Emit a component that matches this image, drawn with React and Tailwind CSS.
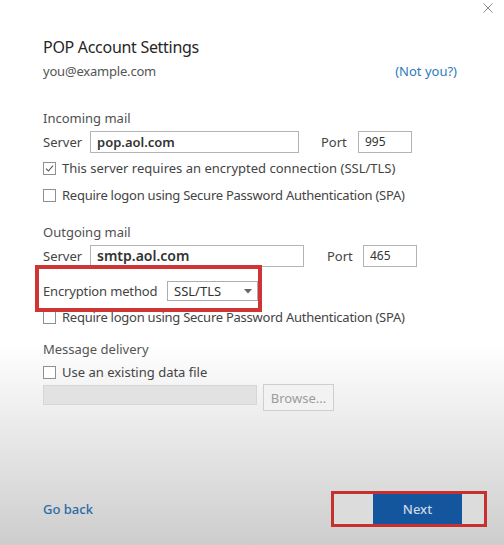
import React from "react";

function Checkbox({ checked }) {
  return (
    <div className="w-[13px] h-[13px] border border-[#8f8f8f] bg-white flex items-center justify-center shrink-0">
      {checked && (
        <svg width="9" height="9" viewBox="0 0 9 9" fill="none">
          <path d="M1 4.6 L3.4 7 L8 1.6" stroke="#555" strokeWidth="1.1" />
        </svg>
      )}
    </div>
  );
}

export default function App() {
  return (
    <div
      className="w-[504px] h-[545px] flex flex-col bg-[linear-gradient(180deg,#ffffff_0%,#ffffff_63%,#cdcdcd_100%)] text-[#444] text-[13px] leading-[20px] overflow-hidden"
      style={{ fontFamily: '"Noto Sans", "Open Sans", sans-serif' }}
    >
      {/* close */}
      <div className="h-[16px] flex justify-end items-center pr-[11px]">
        <svg width="10" height="10" viewBox="0 0 10 10">
          <path d="M0.5 0.5 L9.5 9.5 M9.5 0.5 L0.5 9.5" stroke="#8a8a8a" strokeWidth="1" />
        </svg>
      </div>

      <div className="pl-[43px] pr-[47px] flex flex-col">
        <div className="mt-[20px] h-[22px] flex items-center text-[16px] tracking-[-0.3px] text-[#262626]">
          POP Account Settings
        </div>
        <div className="mt-[3px] h-[20px] flex items-center justify-between">
          <span className="text-[#555] tracking-[-0.2px]">you@example.com</span>
          <span className="text-[#2b7bbd]">(Not you?)</span>
        </div>

        {/* Incoming */}
        <div className="mt-[27px] h-[20px] flex items-center text-[#505050]">Incoming mail</div>
        <div className="mt-[3px] h-[22px] flex items-center">
          <span className="w-[47px]">Server</span>
          <div className="w-[209px] h-[22px] border border-[#b4b4b4] bg-white flex items-center pl-[6px] font-semibold text-[#333]">
            pop.aol.com
          </div>
          <span className="ml-[22px] w-[37px]">Port</span>
          <div className="w-[54px] h-[22px] border border-[#b4b4b4] bg-white flex items-center pl-[6px] text-[12px] text-[#333]">
            995
          </div>
        </div>
        <div className="mt-[5px] h-[20px] flex items-center gap-[6px]">
          <Checkbox checked />
          <span>This server requires an encrypted connection (SSL/TLS)</span>
        </div>
        <div className="mt-[7px] h-[20px] flex items-center gap-[6px]">
          <Checkbox />
          <span className="tracking-[-0.25px]">Require logon using Secure Password Authentication (SPA)</span>
        </div>

        {/* Outgoing */}
        <div className="mt-[17px] h-[20px] flex items-center text-[#505050]">Outgoing mail</div>
        <div className="mt-[3px] h-[22px] flex items-center">
          <span className="w-[47px]">Server</span>
          <div className="w-[214px] h-[22px] border border-[#b4b4b4] bg-white flex items-center pl-[6px] font-semibold text-[#333] text-[14px]">
            smtp.aol.com
          </div>
          <span className="ml-[23px] w-[36px]">Port</span>
          <div className="w-[54px] h-[22px] border border-[#b4b4b4] bg-white flex items-center pl-[6px] text-[12px] text-[#333]">
            465
          </div>
        </div>
        <div className="relative mt-[14px] h-[20px] flex items-center">
          <span className="w-[124px] tracking-[-0.15px]">Encryption method</span>
          <div className="w-[91px] h-[20px] border border-[#adadad] bg-white flex items-center justify-between pl-[6px] pr-[5px] text-[#333]">
            <span>SSL/TLS</span>
            <svg width="8" height="5" viewBox="0 0 8 5">
              <path d="M0 0 L8 0 L4 4.5 Z" fill="#666" />
            </svg>
          </div>
          <div className="absolute left-[-8px] top-[-16px] w-[227px] h-[47px] border-[4px] border-[#cf3535]" />
        </div>
        <div className="mt-[6px] h-[20px] flex items-center gap-[6px]">
          <Checkbox />
          <span className="tracking-[-0.25px]">Require logon using Secure Password Authentication (SPA)</span>
        </div>

        {/* Message delivery */}
        <div className="mt-[12px] h-[20px] flex items-center text-[#555]">Message delivery</div>
        <div className="mt-[3px] h-[20px] flex items-center gap-[6px]">
          <Checkbox />
          <span>Use an existing data file</span>
        </div>
        <div className="mt-[2px] flex items-start gap-[6px]">
          <div className="mt-[1px] w-[214px] h-[20px] bg-[#e2e2e2] border border-[#d6d6d6]" />
          <div className="w-[71px] h-[27px] border border-[#cfcfcf] bg-[#f2f2f2] flex items-center justify-center text-[#9c9c9c]">
            Browse...
          </div>
        </div>
      </div>

      {/* footer */}
      <div className="mt-auto mb-[18px] flex items-center justify-between pl-[43px] pr-[17px]">
        <span className="text-[#2a6aa6] font-medium">Go back</span>
        <div className="w-[156px] h-[36px] border-[3px] border-[#c7302e] bg-[#dcdcdc] flex items-center pl-[39px]">
          <div className="w-[89px] h-[30px] bg-[#14569e] flex items-center justify-center text-[#cdd7e6] font-medium">
            Next
          </div>
        </div>
      </div>
    </div>
  );
}
